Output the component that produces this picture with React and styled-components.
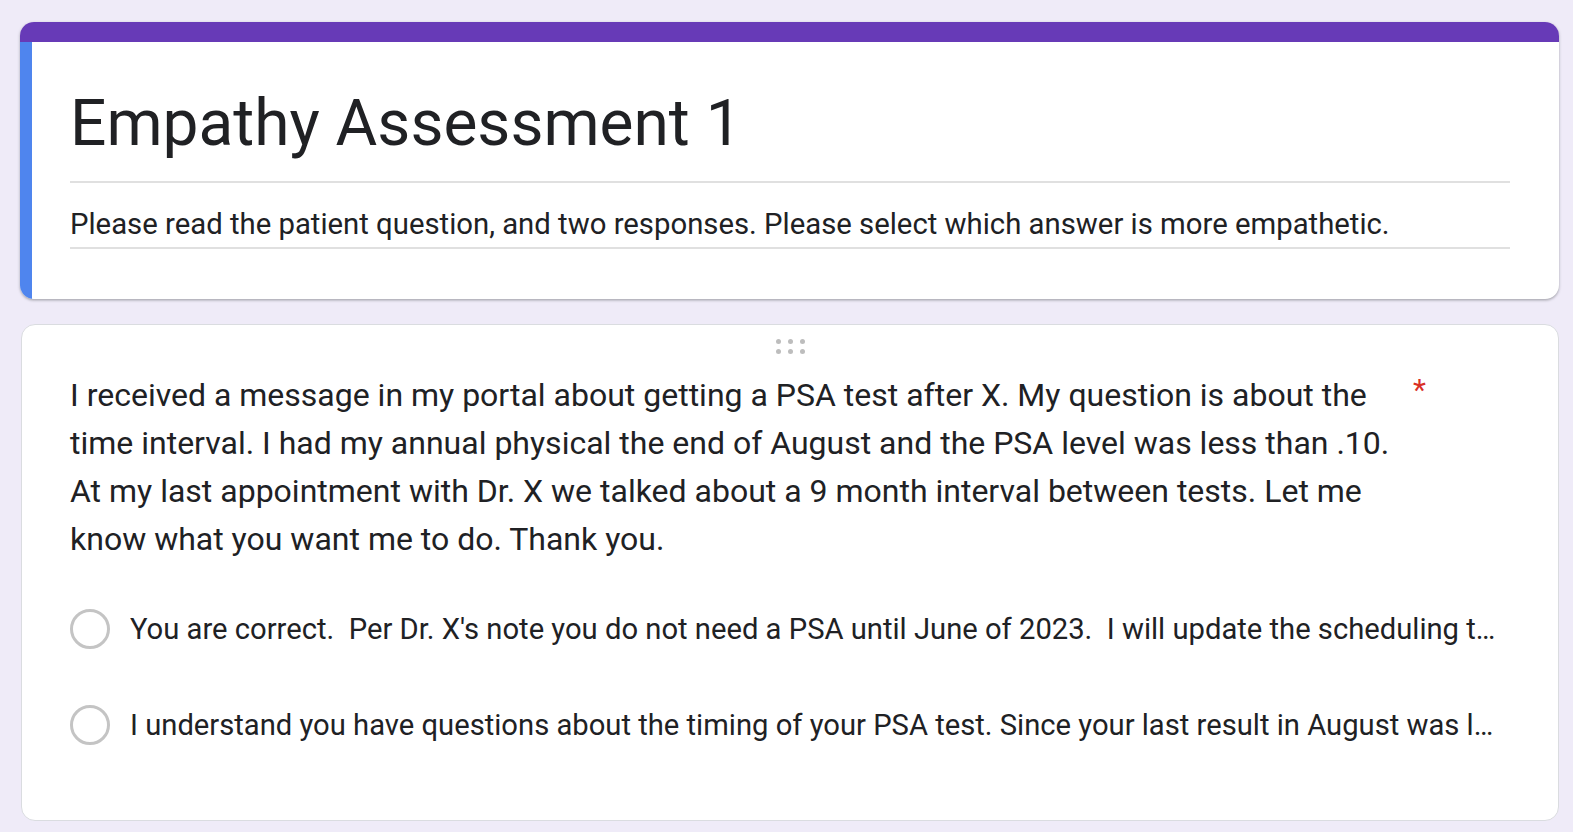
import React from "react";
import styled, { createGlobalStyle } from "styled-components";

const Global = createGlobalStyle`
  html, body { margin: 0; padding: 0; }
  body {
    background: #efebf8;
    font-family: Roboto, "Noto Sans", Arial, sans-serif;
    color: #202124;
  }
`;

const Page = styled.div`
  padding: 22px 14px 12px 20px;
  display: flex;
  flex-direction: column;
  gap: 25px;
`;

const HeaderCard = styled.section`
  background: #fff;
  border-radius: 14px;
  overflow: hidden;
  box-shadow: 0 1px 3px rgba(60, 64, 67, 0.35), 0 2px 2px rgba(60, 64, 67, 0.1);
`;

const TopBar = styled.div`
  height: 20px;
  background: #673ab7;
`;

const HeaderBody = styled.div`
  border-left: 12px solid #4f85ee;
  padding: 42px 49px 50px 38px;
`;

const Title = styled.h1`
  margin: 0;
  font-weight: 400;
  font-size: 64px;
  line-height: 80px;
  padding-bottom: 17px;
  border-bottom: 2px solid #e0e0e0;
  letter-spacing: 0;
`;

const Description = styled.p`
  margin: 0;
  font-size: 29.3px;
  line-height: 36px;
  padding: 23px 0 5px;
  border-bottom: 2px solid #e0e0e0;
`;

const QuestionCard = styled.section`
  background: #fff;
  border: 1px solid #dadce0;
  border-radius: 14px;
  padding: 14px 50px 47px 48px;
  margin-left: 1px;
`;

const Handle = styled.div`
  display: grid;
  grid-template-columns: repeat(3, 5px);
  gap: 5px 7px;
  justify-content: center;
  margin: 0 -50px 0 -48px;
`;

const Dot = styled.span`
  width: 5px;
  height: 5px;
  border-radius: 50%;
  background: #bdbdbd;
`;

const QuestionRow = styled.div`
  display: flex;
  align-items: flex-start;
  margin-top: 17px;
`;

const QuestionText = styled.div`
  font-size: 32px;
  line-height: 48px;
  width: 1335px;
`;

const Required = styled.span`
  color: #d93025;
  font-size: 30px;
  line-height: 38px;
  margin-left: 8px;
`;

const Options = styled.div`
  display: flex;
  flex-direction: column;
  margin-top: 18px;
`;

const Option = styled.label`
  display: flex;
  align-items: center;
  height: 96px;
  gap: 20px;
  min-width: 0;
`;

const Radio = styled.span`
  flex: none;
  width: 40px;
  height: 40px;
  box-sizing: border-box;
  border: 3px solid #c4c4c4;
  border-radius: 50%;
`;

const OptionText = styled.span`
  font-size: 29.2px;
  line-height: 36px;
  white-space: pre;
  overflow: hidden;
  text-overflow: ellipsis;
  min-width: 0;
`;

const options = [
  "You are correct.  Per Dr. X's note you do not need a PSA until June of 2023.  I will update the scheduling team to reflect this.",
  "I understand you have questions about the timing of your PSA test. Since your last result in August was less than .10, Dr. X recommended a 9 month interval.",
];

export default function App() {
  return (
    <>
      <Global />
      <Page>
        <HeaderCard>
          <TopBar />
          <HeaderBody>
            <Title>Empathy Assessment 1</Title>
            <Description>
              Please read the patient question, and two responses. Please select which answer is more empathetic.
            </Description>
          </HeaderBody>
        </HeaderCard>
        <QuestionCard>
          <Handle>
            {Array.from({ length: 6 }).map((_, i) => (
              <Dot key={i} />
            ))}
          </Handle>
          <QuestionRow>
            <QuestionText>
              I received a message in my portal about getting a PSA test after X. My question is about the time interval. I had my annual physical the end of August and the PSA level was less than .10. At my last appointment with Dr. X we talked about a 9 month interval between tests. Let me know what you want me to do. Thank you.
            </QuestionText>
            <Required>*</Required>
          </QuestionRow>
          <Options>
            {options.map((o, i) => (
              <Option key={i}>
                <Radio />
                <OptionText>{o}</OptionText>
              </Option>
            ))}
          </Options>
        </QuestionCard>
      </Page>
    </>
  );
}
